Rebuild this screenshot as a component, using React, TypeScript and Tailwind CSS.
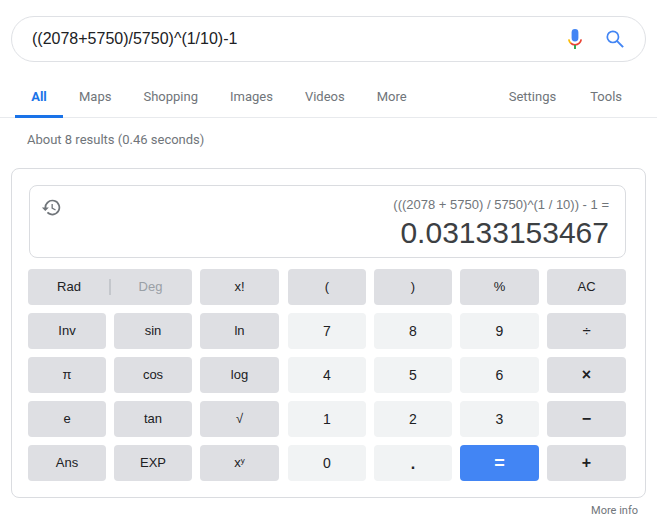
const arial = "font-['Liberation_Sans',Arial,sans-serif]"
const roboto = "font-['Roboto',Arial,sans-serif]"

const dark = "bg-[#dedfe3] text-[#202124]"
const light = "bg-[#f1f3f4] text-[#202124]"

function Key({ label, kind = dark, className = "text-[13px]" }: { label: React.ReactNode; kind?: string; className?: string }) {
  return (
    <div className={`h-9 rounded-[4px] flex items-center justify-center ${kind} ${className}`}>
      {label}
    </div>
  )
}

function MicIcon() {
  return (
    <svg width="14" height="20" viewBox="0 0 14 20" fill="none">
      <rect x="3.6" y="0" width="6.8" height="12.5" rx="3.4" fill="#4285f4" />
      <path d="M.8 10.4a6.3 6.3 0 0 0 2 3.9" stroke="#fbbc05" strokeWidth="1.7" />
      <path d="M2.7 14.2a6.3 6.3 0 0 0 8.6 0 6.3 6.3 0 0 0 1.9-3.8" stroke="#ea4335" strokeWidth="1.7" />
      <rect x="6" y="16" width="2" height="4" fill="#34a853" />
    </svg>
  )
}

function SearchIcon() {
  return (
    <svg width="18" height="18" viewBox="0 0 18 18" fill="none" stroke="#4285f4">
      <circle cx="6.9" cy="6.9" r="5.6" strokeWidth="1.7" />
      <path d="M10.9 10.9l6.2 6.2" strokeWidth="2" />
    </svg>
  )
}

function HistoryIcon() {
  return (
    <svg width="21" height="21" viewBox="0 0 24 24" fill="#70757a">
      <path d="M13 3a9 9 0 0 0-9 9H1l3.89 3.89.07.14L9 12H6a7 7 0 1 1 2.05 4.95l-1.42 1.42A9 9 0 1 0 13 3zm-1 5v5l4.28 2.54.72-1.21-3.5-2.08V8H12z" />
    </svg>
  )
}

export default function App() {
  return (
    <div className={`w-[657px] h-[524px] bg-white overflow-hidden ${arial}`}>
      <div className="px-[11px] pt-4">
        <div className="h-[46px] rounded-[23px] border border-[#dfe1e5] flex items-center pl-[20px] pr-[20px]">
          <div className="flex-1 text-[16px] text-[#202124]">((2078+5750)/5750)^(1/10)-1</div>
          <div className="mr-[24px] flex"><MicIcon /></div>
          <div className="flex mt-[-1px] mr-[1px]"><SearchIcon /></div>
        </div>
      </div>

      <div className={`mt-[15px] h-[41px] border-b border-[#e8eaed] flex pl-[15px] pr-[35px] text-[13px] text-[#70757a] ${roboto}`}>
        <div className="w-12 h-[41px] border-b-[3px] border-[#1a73e8] pt-[10px] text-center font-bold text-[#1a73e8]">All</div>
        <div className="pt-[10px] ml-4">Maps</div>
        <div className="pt-[10px] ml-8">Shopping</div>
        <div className="pt-[10px] ml-8">Images</div>
        <div className="pt-[10px] ml-8">Videos</div>
        <div className="pt-[10px] ml-8">More</div>
        <div className="pt-[10px] ml-auto">Settings</div>
        <div className="pt-[10px] ml-[34px]">Tools</div>
      </div>

      <div className={`mt-[13px] pl-[27px] h-[18px] text-[13px] leading-[18px] text-[#70757a] ${roboto}`}>
        About 8 results (0.46 seconds)
      </div>

      <div className="mx-[11px] mt-[19px] h-[330px] rounded-[8px] border border-[#dadce0] px-4 pt-4">
        <div className="ml-[1px] w-[597px] h-[73px] rounded-[8px] border border-[#dadce0] relative pl-[15px] pr-[16px] pt-[9px] text-right">
          <div className="absolute left-[11px] top-[11px]"><HistoryIcon /></div>
          <div className="text-[13px] leading-[20px] text-[#70757a]">(((2078 + 5750) / 5750)^(1 / 10)) - 1 =</div>
          <div className="text-[30px] leading-[36px] text-[#3c4043]">0.03133153467</div>
        </div>

        <div className="mt-[11px] flex gap-[9px]">
          <div className="grid grid-cols-[78px_78px_79px] gap-2">
            <div className="col-span-2 h-9 rounded-[4px] bg-[#dedfe3] flex items-center text-[13px]">
              <div className="w-[81px] pl-[1px] text-center text-[#202124]">Rad</div>
              <div className="w-[2px] h-[16px] bg-[#c4c7cc]" />
              <div className="flex-1 pr-[2px] text-center text-[#9aa0a6]">Deg</div>
            </div>
            <Key label="x!" />
            <Key label="Inv" />
            <Key label="sin" />
            <Key label="ln" />
            <Key label="π" />
            <Key label="cos" />
            <Key label="log" />
            <Key label="e" />
            <Key label="tan" />
            <Key label="√" />
            <Key label="Ans" />
            <Key label="EXP" />
            <Key label={<span>x<sup className="text-[8px] top-[-4px]">y</sup></span>} />
          </div>
          <div className="grid grid-cols-[78px_78px_79px_79px] gap-2">
            <Key label="(" />
            <Key label=")" />
            <Key label="%" />
            <Key label="AC" />
            <Key label="7" kind={light} className="text-[14px]" />
            <Key label="8" kind={light} className="text-[14px]" />
            <Key label="9" kind={light} className="text-[14px]" />
            <Key label="÷" className="text-[15px]" />
            <Key label="4" kind={light} className="text-[14px]" />
            <Key label="5" kind={light} className="text-[14px]" />
            <Key label="6" kind={light} className="text-[14px]" />
            <Key label="×" className="font-bold text-[16px]" />
            <Key label="1" kind={light} className="text-[14px]" />
            <Key label="2" kind={light} className="text-[14px]" />
            <Key label="3" kind={light} className="text-[14px]" />
            <Key label="−" className="font-bold text-[16px]" />
            <Key label="0" kind={light} className="text-[14px]" />
            <Key label="." kind={light} className="font-bold text-[16px] pt-[2px]" />
            <Key label="=" kind="bg-[#4285f4] text-white" className="font-bold text-[18px]" />
            <Key label="+" className="font-bold text-[16px]" />
          </div>
        </div>
      </div>

      <div className={`mt-[5px] pr-[19px] text-right text-[11px] leading-[16px] text-[#70757a] ${roboto}`}>More info</div>
    </div>
  )
}
